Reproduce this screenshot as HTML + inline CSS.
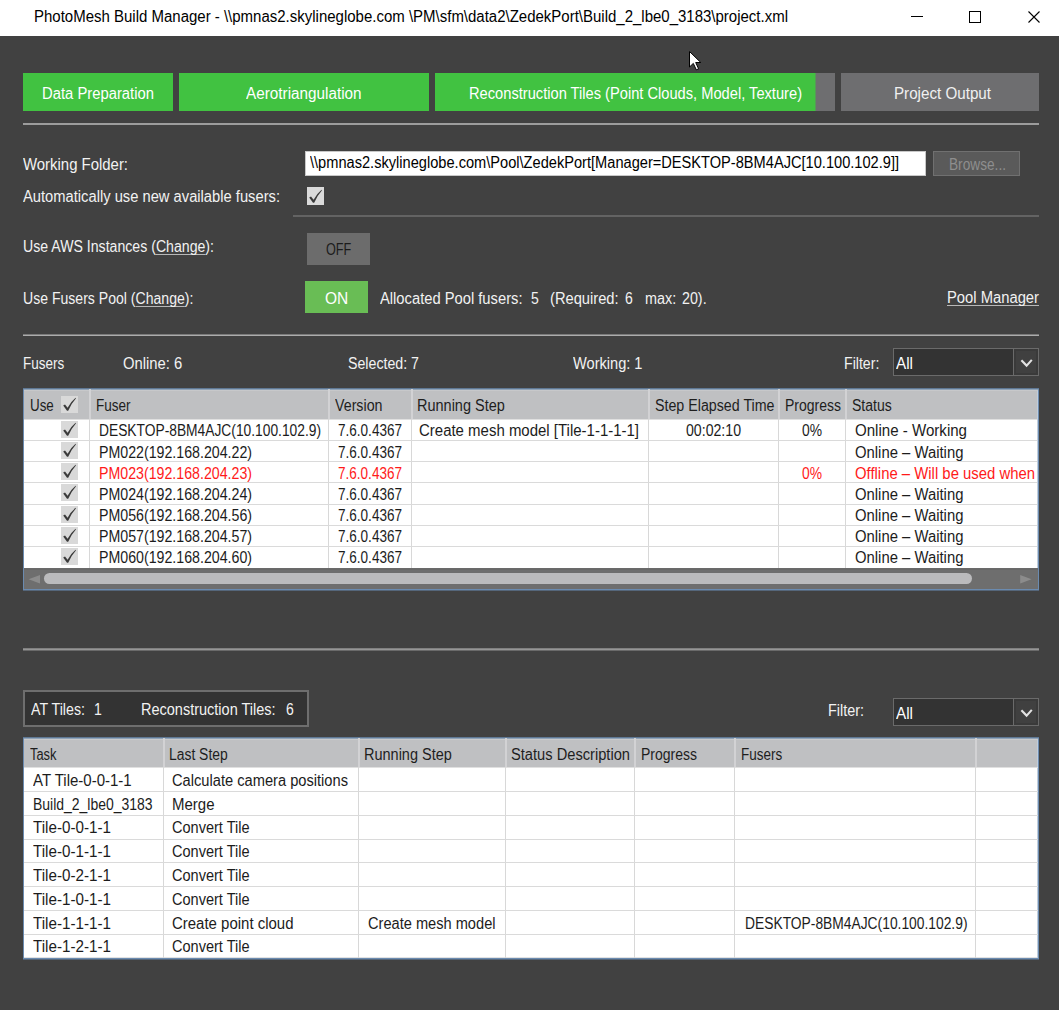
<!DOCTYPE html><html><head><meta charset="utf-8"><style>
html,body{margin:0;padding:0}body{width:1059px;height:1010px;position:relative;overflow:hidden;background:#414141;font-family:"Liberation Sans", sans-serif}
.t{position:absolute;white-space:pre;transform-origin:0 0}u{text-decoration:underline;text-underline-offset:2px;text-decoration-skip-ink:none;text-decoration-color:#b8b8b8}
</style></head><body>
<div style="position:absolute;left:0px;top:0px;width:1059px;height:36px;background:#ffffff;"></div>
<div class="t" id="t0" style="left:33.60px;top:9.46px;font-size:16px;line-height:16px;color:#000000;transform:scaleX(0.9368);">PhotoMesh Build Manager - \\pmnas2.skylineglobe.com \PM\sfm\data2\ZedekPort\Build_2_lbe0_3183\project.xml</div>
<div style="position:absolute;left:911px;top:16px;width:12px;height:1px;background:#000;"></div>
<div style="position:absolute;left:969px;top:11px;width:10px;height:10px;border:1px solid #000"></div>
<svg style="position:absolute;left:1027px;top:10px" width="14" height="14"><path d="M1.5 1.5 L12.5 12.5 M12.5 1.5 L1.5 12.5" stroke="#000" stroke-width="1.1"/></svg>
<div style="position:absolute;left:23px;top:73px;width:150px;height:38px;background:#41c241;"></div>
<div style="position:absolute;left:179px;top:73px;width:250px;height:38px;background:#41c241;"></div>
<div style="position:absolute;left:435px;top:73px;width:400px;height:38px;background:#6e6e70;"></div>
<div style="position:absolute;left:435px;top:73px;width:380px;height:38px;background:#41c241;"></div>
<div style="position:absolute;left:815px;top:73px;width:1px;height:38px;background:#579858;"></div>
<div style="position:absolute;left:841px;top:73px;width:198px;height:38px;background:#6e6e70;"></div>
<div class="t" id="t1" style="left:42.00px;top:85.83px;font-size:15.8px;line-height:15.8px;color:#ffffff;transform:scaleX(0.9377);">Data Preparation</div>
<div class="t" id="t2" style="left:246.30px;top:85.83px;font-size:15.8px;line-height:15.8px;color:#ffffff;transform:scaleX(0.9679);">Aerotriangulation</div>
<div class="t" id="t3" style="left:469.00px;top:85.83px;font-size:15.8px;line-height:15.8px;color:#ffffff;transform:scaleX(0.9281);">Reconstruction Tiles (Point Clouds, Model, Texture)</div>
<div class="t" id="t4" style="left:893.50px;top:85.83px;font-size:15.8px;line-height:15.8px;color:#f0f0f0;transform:scaleX(0.9605);">Project Output</div>
<div style="position:absolute;left:23px;top:123px;width:1016px;height:2px;background:#9c9c9c;"></div>
<div class="t" id="t5" style="left:23.00px;top:156.86px;font-size:16px;line-height:16px;color:#f2f2f2;transform:scaleX(0.9322);">Working Folder:</div>
<div style="position:absolute;left:305px;top:151px;width:621px;height:25px;background:#c8c8c8;"></div>
<div style="position:absolute;left:306px;top:152px;width:619px;height:23px;background:#ffffff;"></div>
<div class="t" id="t6" style="left:310.00px;top:155.46px;font-size:16px;line-height:16px;color:#000000;transform:scaleX(0.9133);">\\pmnas2.skylineglobe.com\Pool\ZedekPort[Manager=DESKTOP-8BM4AJC[10.100.102.9]]</div>
<div style="position:absolute;left:933px;top:151px;width:87px;height:25px;background:#707070;"></div>
<div style="position:absolute;left:934px;top:152px;width:85px;height:23px;background:#5a5a5a;"></div>
<div class="t" id="t7" style="left:948.50px;top:156.76px;font-size:16px;line-height:16px;color:#8e8e8e;transform:scaleX(0.8547);">Browse...</div>
<div class="t" id="t8" style="left:23.00px;top:189.06px;font-size:16px;line-height:16px;color:#f2f2f2;transform:scaleX(0.9203);">Automatically use new available fusers:</div>
<div style="position:absolute;left:307px;top:187px;width:17px;height:18px;background:#dadada;"></div>
<svg style="position:absolute;left:307px;top:188px" width="17" height="17"><path d="M2.2 9.6 L4.0 8.6 L6.6 11.8 Q9.5 6 14.6 1.8 L14.9 2.4 Q10.2 7.4 7.2 14.8 L6.0 14.8 Z" fill="#3a3a3a"/></svg>
<div style="position:absolute;left:293px;top:215px;width:746px;height:2px;background:#636363;"></div>
<div class="t" id="t9" style="left:23.00px;top:238.96px;font-size:16px;line-height:16px;color:#f2f2f2;transform:scaleX(0.8826);">Use AWS Instances (<u>Change</u>):</div>
<div style="position:absolute;left:307px;top:233px;width:63px;height:32px;background:#6c6c6c;"></div>
<div class="t" id="t10" style="left:325.60px;top:241.86px;font-size:16px;line-height:16px;color:#1c1c1c;transform:scaleX(0.7906);">OFF</div>
<div class="t" id="t11" style="left:23.00px;top:290.56px;font-size:16px;line-height:16px;color:#f2f2f2;transform:scaleX(0.8789);">Use Fusers Pool (<u>Change</u>):</div>
<div style="position:absolute;left:305px;top:281px;width:63px;height:32px;background:#69bd55;"></div>
<div class="t" id="t12" style="left:325.40px;top:290.56px;font-size:16px;line-height:16px;color:#ffffff;transform:scaleX(0.9708);">ON</div>
<div class="t" id="t13" style="left:380.30px;top:290.56px;font-size:16px;line-height:16px;color:#f2f2f2;transform:scaleX(0.9208);">Allocated Pool fusers:</div>
<div class="t" id="t14" style="left:530.80px;top:290.56px;font-size:16px;line-height:16px;color:#f2f2f2;transform:scaleX(0.8758);">5</div>
<div class="t" id="t15" style="left:550.40px;top:290.56px;font-size:16px;line-height:16px;color:#f2f2f2;transform:scaleX(0.9183);">(Required:</div>
<div class="t" id="t16" style="left:624.60px;top:290.56px;font-size:16px;line-height:16px;color:#f2f2f2;transform:scaleX(0.8758);">6</div>
<div class="t" id="t17" style="left:644.80px;top:290.56px;font-size:16px;line-height:16px;color:#f2f2f2;transform:scaleX(0.8999);">max:</div>
<div class="t" id="t18" style="left:681.60px;top:290.56px;font-size:16px;line-height:16px;color:#f2f2f2;transform:scaleX(0.8920);">20).</div>
<div class="t" id="t19" style="left:947.00px;top:290.26px;font-size:16px;line-height:16px;color:#f2f2f2;transform:scaleX(0.9235);"><u>Pool Manager</u></div>
<div style="position:absolute;left:23px;top:334px;width:1016px;height:1px;background:#7a7a7a;"></div>
<div style="position:absolute;left:23px;top:335px;width:1016px;height:1px;background:#acacac;"></div>
<div class="t" id="t20" style="left:23.00px;top:355.76px;font-size:16px;line-height:16px;color:#f2f2f2;transform:scaleX(0.8424);">Fusers</div>
<div class="t" id="t21" style="left:123.00px;top:355.56px;font-size:16px;line-height:16px;color:#f2f2f2;transform:scaleX(0.9259);">Online: 6</div>
<div class="t" id="t22" style="left:348.10px;top:355.56px;font-size:16px;line-height:16px;color:#f2f2f2;transform:scaleX(0.8868);">Selected: 7</div>
<div class="t" id="t23" style="left:573.40px;top:355.56px;font-size:16px;line-height:16px;color:#f2f2f2;transform:scaleX(0.9122);">Working: 1</div>
<div class="t" id="t24" style="left:844.00px;top:355.66px;font-size:16px;line-height:16px;color:#f2f2f2;transform:scaleX(0.8825);">Filter:</div>
<div style="position:absolute;left:893px;top:348px;width:146px;height:28px;background:#6a6a6a;"></div>
<div style="position:absolute;left:894px;top:349px;width:144px;height:26px;background:#333333;"></div>
<div style="position:absolute;left:1013px;top:349px;width:1px;height:26px;background:#6a6a6a;"></div>
<div style="position:absolute;left:1014px;top:349px;width:24px;height:26px;background:#3a3a3a;"></div>
<div style="position:absolute;left:1016px;top:351px;width:20px;height:22px;background:#404040;"></div>
<svg style="position:absolute;left:1014px;top:348px" width="24" height="28"><path d="M7.4 12.2 L12.6 17.6 L17.8 11.9" fill="none" stroke="#e2e2e2" stroke-width="2.1"/></svg>
<div class="t" id="t25" style="left:896.20px;top:355.66px;font-size:16px;line-height:16px;color:#ffffff;transform:scaleX(0.9561);">All</div>
<div style="position:absolute;left:23px;top:388px;width:1016px;height:203px;background:#6b8bb0;"></div>
<div style="position:absolute;left:23px;top:388px;width:1016px;height:1px;background:#5f7894;"></div>
<div style="position:absolute;left:23px;top:590px;width:1016px;height:1px;background:#55667a;"></div>
<div style="position:absolute;left:24px;top:389px;width:1014px;height:200px;background:#ffffff;"></div>
<div style="position:absolute;left:24px;top:389px;width:1014px;height:1px;background:#8fa3b8;"></div>
<div style="position:absolute;left:24px;top:390px;width:1014px;height:1px;background:#c7c8ca;"></div>
<div style="position:absolute;left:24px;top:391px;width:1014px;height:28px;background:#bfc0c2;"></div>
<div style="position:absolute;left:24px;top:419px;width:1014px;height:1px;background:#e0e0e0;"></div>
<div style="position:absolute;left:89px;top:389px;width:2px;height:30px;background:#d2d2d4;"></div>
<div style="position:absolute;left:89px;top:419px;width:1px;height:149px;background:#d8d8d8;"></div>
<div style="position:absolute;left:328px;top:389px;width:2px;height:30px;background:#d2d2d4;"></div>
<div style="position:absolute;left:328px;top:419px;width:1px;height:149px;background:#d8d8d8;"></div>
<div style="position:absolute;left:411px;top:389px;width:2px;height:30px;background:#d2d2d4;"></div>
<div style="position:absolute;left:411px;top:419px;width:1px;height:149px;background:#d8d8d8;"></div>
<div style="position:absolute;left:648px;top:389px;width:2px;height:30px;background:#d2d2d4;"></div>
<div style="position:absolute;left:648px;top:419px;width:1px;height:149px;background:#d8d8d8;"></div>
<div style="position:absolute;left:778px;top:389px;width:2px;height:30px;background:#d2d2d4;"></div>
<div style="position:absolute;left:778px;top:419px;width:1px;height:149px;background:#d8d8d8;"></div>
<div style="position:absolute;left:845px;top:389px;width:2px;height:30px;background:#d2d2d4;"></div>
<div style="position:absolute;left:845px;top:419px;width:1px;height:149px;background:#d8d8d8;"></div>
<div style="position:absolute;left:24px;top:440px;width:1014px;height:1px;background:#dadada;"></div>
<div style="position:absolute;left:24px;top:461px;width:1014px;height:1px;background:#dadada;"></div>
<div style="position:absolute;left:24px;top:482px;width:1014px;height:1px;background:#dadada;"></div>
<div style="position:absolute;left:24px;top:504px;width:1014px;height:1px;background:#dadada;"></div>
<div style="position:absolute;left:24px;top:525px;width:1014px;height:1px;background:#dadada;"></div>
<div style="position:absolute;left:24px;top:546px;width:1014px;height:1px;background:#dadada;"></div>
<div class="t" id="t26" style="left:29.60px;top:398.06px;font-size:16px;line-height:16px;color:#1e1e1e;transform:scaleX(0.8365);">Use</div>
<div style="position:absolute;left:61px;top:396px;width:17px;height:17px;background:#d9d9d9;"></div>
<svg style="position:absolute;left:61px;top:396px" width="17" height="17"><path d="M2.2 9.6 L4.0 8.6 L6.6 11.8 Q9.5 6 14.6 1.8 L14.9 2.4 Q10.2 7.4 7.2 14.8 L6.0 14.8 Z" fill="#3a3a3a"/></svg>
<div class="t" id="t27" style="left:96.00px;top:398.06px;font-size:16px;line-height:16px;color:#1e1e1e;transform:scaleX(0.8458);">Fuser</div>
<div class="t" id="t28" style="left:335.00px;top:398.06px;font-size:16px;line-height:16px;color:#1e1e1e;transform:scaleX(0.8899);">Version</div>
<div class="t" id="t29" style="left:417.00px;top:398.06px;font-size:16px;line-height:16px;color:#1e1e1e;transform:scaleX(0.9054);">Running Step</div>
<div class="t" id="t30" style="left:654.50px;top:398.06px;font-size:16px;line-height:16px;color:#1e1e1e;transform:scaleX(0.8898);">Step Elapsed Time</div>
<div class="t" id="t31" style="left:784.80px;top:398.06px;font-size:16px;line-height:16px;color:#1e1e1e;transform:scaleX(0.8746);">Progress</div>
<div class="t" id="t32" style="left:851.70px;top:398.06px;font-size:16px;line-height:16px;color:#1e1e1e;transform:scaleX(0.8752);">Status</div>
<div style="position:absolute;left:61px;top:421px;width:17px;height:17px;background:#d9d9d9;"></div>
<svg style="position:absolute;left:61px;top:421px" width="17" height="17"><path d="M2.2 9.6 L4.0 8.6 L6.6 11.8 Q9.5 6 14.6 1.8 L14.9 2.4 Q10.2 7.4 7.2 14.8 L6.0 14.8 Z" fill="#3a3a3a"/></svg>
<div class="t" id="t33" style="left:98.50px;top:423.46px;font-size:16px;line-height:16px;color:#1c1c1c;transform:scaleX(0.8618);">DESKTOP-8BM4AJC(10.100.102.9)</div>
<div class="t" id="t34" style="left:337.80px;top:423.46px;font-size:16px;line-height:16px;color:#1c1c1c;transform:scaleX(0.8463);">7.6.0.4367</div>
<div class="t" id="t35" style="left:419.40px;top:423.46px;font-size:16px;line-height:16px;color:#1c1c1c;transform:scaleX(0.9360);">Create mesh model [Tile-1-1-1-1]</div>
<div class="t" id="t36" style="left:686.00px;top:423.46px;font-size:16px;line-height:16px;color:#1c1c1c;transform:scaleX(0.8831);">00:02:10</div>
<div class="t" id="t37" style="left:802.00px;top:423.46px;font-size:16px;line-height:16px;color:#1c1c1c;transform:scaleX(0.8649);">0%</div>
<div class="t" id="t38" style="left:854.70px;top:423.46px;font-size:16px;line-height:16px;color:#1c1c1c;transform:scaleX(0.9423);">Online - Working</div>
<div style="position:absolute;left:61px;top:442px;width:17px;height:17px;background:#d9d9d9;"></div>
<svg style="position:absolute;left:61px;top:442px" width="17" height="17"><path d="M2.2 9.6 L4.0 8.6 L6.6 11.8 Q9.5 6 14.6 1.8 L14.9 2.4 Q10.2 7.4 7.2 14.8 L6.0 14.8 Z" fill="#3a3a3a"/></svg>
<div class="t" id="t39" style="left:98.50px;top:444.60px;font-size:16px;line-height:16px;color:#1c1c1c;transform:scaleX(0.8866);">PM022(192.168.204.22)</div>
<div class="t" id="t40" style="left:337.80px;top:444.60px;font-size:16px;line-height:16px;color:#1c1c1c;transform:scaleX(0.8463);">7.6.0.4367</div>
<div class="t" id="t41" style="left:854.70px;top:444.60px;font-size:16px;line-height:16px;color:#1c1c1c;transform:scaleX(0.9281);">Online – Waiting</div>
<div style="position:absolute;left:61px;top:463px;width:17px;height:17px;background:#d9d9d9;"></div>
<svg style="position:absolute;left:61px;top:463px" width="17" height="17"><path d="M2.2 9.6 L4.0 8.6 L6.6 11.8 Q9.5 6 14.6 1.8 L14.9 2.4 Q10.2 7.4 7.2 14.8 L6.0 14.8 Z" fill="#3a3a3a"/></svg>
<div class="t" id="t42" style="left:98.50px;top:465.74px;font-size:16px;line-height:16px;color:#ff1a1a;transform:scaleX(0.8866);">PM023(192.168.204.23)</div>
<div class="t" id="t43" style="left:337.80px;top:465.74px;font-size:16px;line-height:16px;color:#ff1a1a;transform:scaleX(0.8463);">7.6.0.4367</div>
<div class="t" id="t44" style="left:802.00px;top:465.74px;font-size:16px;line-height:16px;color:#ff1a1a;transform:scaleX(0.8649);">0%</div>
<div class="t" id="t45" style="left:854.70px;top:465.74px;font-size:16px;line-height:16px;color:#ff1a1a;transform:scaleX(0.9298);">Offline – Will be used when</div>
<div style="position:absolute;left:61px;top:484px;width:17px;height:17px;background:#d9d9d9;"></div>
<svg style="position:absolute;left:61px;top:484px" width="17" height="17"><path d="M2.2 9.6 L4.0 8.6 L6.6 11.8 Q9.5 6 14.6 1.8 L14.9 2.4 Q10.2 7.4 7.2 14.8 L6.0 14.8 Z" fill="#3a3a3a"/></svg>
<div class="t" id="t46" style="left:98.50px;top:486.88px;font-size:16px;line-height:16px;color:#1c1c1c;transform:scaleX(0.8866);">PM024(192.168.204.24)</div>
<div class="t" id="t47" style="left:337.80px;top:486.88px;font-size:16px;line-height:16px;color:#1c1c1c;transform:scaleX(0.8463);">7.6.0.4367</div>
<div class="t" id="t48" style="left:854.70px;top:486.88px;font-size:16px;line-height:16px;color:#1c1c1c;transform:scaleX(0.9281);">Online – Waiting</div>
<div style="position:absolute;left:61px;top:506px;width:17px;height:17px;background:#d9d9d9;"></div>
<svg style="position:absolute;left:61px;top:506px" width="17" height="17"><path d="M2.2 9.6 L4.0 8.6 L6.6 11.8 Q9.5 6 14.6 1.8 L14.9 2.4 Q10.2 7.4 7.2 14.8 L6.0 14.8 Z" fill="#3a3a3a"/></svg>
<div class="t" id="t49" style="left:98.50px;top:508.02px;font-size:16px;line-height:16px;color:#1c1c1c;transform:scaleX(0.8866);">PM056(192.168.204.56)</div>
<div class="t" id="t50" style="left:337.80px;top:508.02px;font-size:16px;line-height:16px;color:#1c1c1c;transform:scaleX(0.8463);">7.6.0.4367</div>
<div class="t" id="t51" style="left:854.70px;top:508.02px;font-size:16px;line-height:16px;color:#1c1c1c;transform:scaleX(0.9281);">Online – Waiting</div>
<div style="position:absolute;left:61px;top:527px;width:17px;height:17px;background:#d9d9d9;"></div>
<svg style="position:absolute;left:61px;top:527px" width="17" height="17"><path d="M2.2 9.6 L4.0 8.6 L6.6 11.8 Q9.5 6 14.6 1.8 L14.9 2.4 Q10.2 7.4 7.2 14.8 L6.0 14.8 Z" fill="#3a3a3a"/></svg>
<div class="t" id="t52" style="left:98.50px;top:529.16px;font-size:16px;line-height:16px;color:#1c1c1c;transform:scaleX(0.8866);">PM057(192.168.204.57)</div>
<div class="t" id="t53" style="left:337.80px;top:529.16px;font-size:16px;line-height:16px;color:#1c1c1c;transform:scaleX(0.8463);">7.6.0.4367</div>
<div class="t" id="t54" style="left:854.70px;top:529.16px;font-size:16px;line-height:16px;color:#1c1c1c;transform:scaleX(0.9281);">Online – Waiting</div>
<div style="position:absolute;left:61px;top:548px;width:17px;height:17px;background:#d9d9d9;"></div>
<svg style="position:absolute;left:61px;top:548px" width="17" height="17"><path d="M2.2 9.6 L4.0 8.6 L6.6 11.8 Q9.5 6 14.6 1.8 L14.9 2.4 Q10.2 7.4 7.2 14.8 L6.0 14.8 Z" fill="#3a3a3a"/></svg>
<div class="t" id="t55" style="left:98.50px;top:550.30px;font-size:16px;line-height:16px;color:#1c1c1c;transform:scaleX(0.8866);">PM060(192.168.204.60)</div>
<div class="t" id="t56" style="left:337.80px;top:550.30px;font-size:16px;line-height:16px;color:#1c1c1c;transform:scaleX(0.8463);">7.6.0.4367</div>
<div class="t" id="t57" style="left:854.70px;top:550.30px;font-size:16px;line-height:16px;color:#1c1c1c;transform:scaleX(0.9281);">Online – Waiting</div>
<div style="position:absolute;left:1038px;top:389px;width:1px;height:201px;background:#6b8bb0;"></div>
<div style="position:absolute;left:1037px;top:391px;width:1px;height:177px;background:#c0cddb;"></div>
<div style="position:absolute;left:24px;top:568px;width:1014px;height:1px;background:#6a6a6a;"></div>
<div style="position:absolute;left:24px;top:569px;width:1014px;height:1px;background:#686868;"></div>
<div style="position:absolute;left:24px;top:570px;width:1014px;height:19px;background:#6e6e6e;"></div>
<div style="position:absolute;left:44px;top:573px;width:928px;height:11px;border-radius:6px;background:#bbbbbd"></div>
<svg style="position:absolute;left:28px;top:574px" width="13" height="10"><path d="M0.6 5.2 L12 0.9 L12 9.5 Z" fill="#8c8c8c"/></svg>
<svg style="position:absolute;left:1020px;top:574px" width="12" height="10"><path d="M11.6 5.2 L0.2 0.9 L0.2 9.5 Z" fill="#8c8c8c"/></svg>
<div style="position:absolute;left:23px;top:648px;width:1016px;height:1px;background:#808080;"></div>
<div style="position:absolute;left:23px;top:649px;width:1016px;height:1px;background:#969696;"></div>
<div style="position:absolute;left:23px;top:650px;width:1016px;height:1px;background:#6a6a6a;"></div>
<div style="position:absolute;left:23px;top:690px;width:286px;height:37px;background:#6e6e6e;"></div>
<div style="position:absolute;left:25px;top:692px;width:282px;height:33px;background:#333333;"></div>
<div class="t" id="t58" style="left:31.10px;top:701.66px;font-size:16px;line-height:16px;color:#f2f2f2;transform:scaleX(0.8887);">AT Tiles:</div>
<div class="t" id="t59" style="left:94.20px;top:701.66px;font-size:16px;line-height:16px;color:#f2f2f2;transform:scaleX(0.8758);">1</div>
<div class="t" id="t60" style="left:140.80px;top:701.66px;font-size:16px;line-height:16px;color:#f2f2f2;transform:scaleX(0.9063);">Reconstruction Tiles:</div>
<div class="t" id="t61" style="left:286.00px;top:701.66px;font-size:16px;line-height:16px;color:#f2f2f2;transform:scaleX(0.8758);">6</div>
<div class="t" id="t62" style="left:827.60px;top:703.16px;font-size:16px;line-height:16px;color:#f2f2f2;transform:scaleX(0.9000);">Filter:</div>
<div style="position:absolute;left:893px;top:698px;width:146px;height:28px;background:#6a6a6a;"></div>
<div style="position:absolute;left:894px;top:699px;width:144px;height:26px;background:#333333;"></div>
<div style="position:absolute;left:1013px;top:699px;width:1px;height:26px;background:#6a6a6a;"></div>
<div style="position:absolute;left:1014px;top:699px;width:24px;height:26px;background:#3a3a3a;"></div>
<div style="position:absolute;left:1016px;top:701px;width:20px;height:22px;background:#404040;"></div>
<svg style="position:absolute;left:1014px;top:698px" width="24" height="28"><path d="M7.4 12.2 L12.6 17.6 L17.8 11.9" fill="none" stroke="#e2e2e2" stroke-width="2.1"/></svg>
<div class="t" id="t63" style="left:896.20px;top:705.56px;font-size:16px;line-height:16px;color:#ffffff;transform:scaleX(0.9561);">All</div>
<div style="position:absolute;left:23px;top:737px;width:1016px;height:223px;background:#6b8bb0;"></div>
<div style="position:absolute;left:23px;top:737px;width:1016px;height:1px;background:#5f7894;"></div>
<div style="position:absolute;left:23px;top:959px;width:1016px;height:1px;background:#55667a;"></div>
<div style="position:absolute;left:24px;top:738px;width:1014px;height:220px;background:#ffffff;"></div>
<div style="position:absolute;left:24px;top:738px;width:1014px;height:1px;background:#8fa3b8;"></div>
<div style="position:absolute;left:24px;top:739px;width:1014px;height:1px;background:#c9cacc;"></div>
<div style="position:absolute;left:24px;top:740px;width:1014px;height:27px;background:#bfc0c2;"></div>
<div style="position:absolute;left:24px;top:957px;width:1014px;height:1px;background:#e2e2e2;"></div>
<div style="position:absolute;left:1037px;top:740px;width:1px;height:218px;background:#c0cddb;"></div>
<div style="position:absolute;left:24px;top:767px;width:1014px;height:1px;background:#e0e0e0;"></div>
<div style="position:absolute;left:163px;top:738px;width:2px;height:29px;background:#d2d2d4;"></div>
<div style="position:absolute;left:163px;top:767px;width:1px;height:191px;background:#d8d8d8;"></div>
<div style="position:absolute;left:358px;top:738px;width:2px;height:29px;background:#d2d2d4;"></div>
<div style="position:absolute;left:358px;top:767px;width:1px;height:191px;background:#d8d8d8;"></div>
<div style="position:absolute;left:505px;top:738px;width:2px;height:29px;background:#d2d2d4;"></div>
<div style="position:absolute;left:505px;top:767px;width:1px;height:191px;background:#d8d8d8;"></div>
<div style="position:absolute;left:634px;top:738px;width:2px;height:29px;background:#d2d2d4;"></div>
<div style="position:absolute;left:634px;top:767px;width:1px;height:191px;background:#d8d8d8;"></div>
<div style="position:absolute;left:734px;top:738px;width:2px;height:29px;background:#d2d2d4;"></div>
<div style="position:absolute;left:734px;top:767px;width:1px;height:191px;background:#d8d8d8;"></div>
<div style="position:absolute;left:975px;top:738px;width:2px;height:29px;background:#d2d2d4;"></div>
<div style="position:absolute;left:975px;top:767px;width:1px;height:191px;background:#d8d8d8;"></div>
<div style="position:absolute;left:24px;top:791px;width:1014px;height:1px;background:#dadada;"></div>
<div style="position:absolute;left:24px;top:815px;width:1014px;height:1px;background:#dadada;"></div>
<div style="position:absolute;left:24px;top:839px;width:1014px;height:1px;background:#dadada;"></div>
<div style="position:absolute;left:24px;top:862px;width:1014px;height:1px;background:#dadada;"></div>
<div style="position:absolute;left:24px;top:886px;width:1014px;height:1px;background:#dadada;"></div>
<div style="position:absolute;left:24px;top:910px;width:1014px;height:1px;background:#dadada;"></div>
<div style="position:absolute;left:24px;top:934px;width:1014px;height:1px;background:#dadada;"></div>
<div class="t" id="t64" style="left:30.00px;top:747.36px;font-size:16px;line-height:16px;color:#1e1e1e;transform:scaleX(0.8053);">Task</div>
<div class="t" id="t65" style="left:169.10px;top:747.36px;font-size:16px;line-height:16px;color:#1e1e1e;transform:scaleX(0.8682);">Last Step</div>
<div class="t" id="t66" style="left:364.20px;top:747.36px;font-size:16px;line-height:16px;color:#1e1e1e;transform:scaleX(0.9054);">Running Step</div>
<div class="t" id="t67" style="left:511.00px;top:747.36px;font-size:16px;line-height:16px;color:#1e1e1e;transform:scaleX(0.9165);">Status Description</div>
<div class="t" id="t68" style="left:641.00px;top:747.36px;font-size:16px;line-height:16px;color:#1e1e1e;transform:scaleX(0.8746);">Progress</div>
<div class="t" id="t69" style="left:741.00px;top:747.36px;font-size:16px;line-height:16px;color:#1e1e1e;transform:scaleX(0.8424);">Fusers</div>
<div class="t" id="t70" style="left:33.30px;top:772.76px;font-size:16px;line-height:16px;color:#1c1c1c;transform:scaleX(0.9380);">AT Tile-0-0-1-1</div>
<div class="t" id="t71" style="left:172.40px;top:772.76px;font-size:16px;line-height:16px;color:#1c1c1c;transform:scaleX(0.9162);">Calculate camera positions</div>
<div class="t" id="t72" style="left:33.30px;top:796.56px;font-size:16px;line-height:16px;color:#1c1c1c;transform:scaleX(0.8729);">Build_2_lbe0_3183</div>
<div class="t" id="t73" style="left:172.40px;top:796.56px;font-size:16px;line-height:16px;color:#1c1c1c;transform:scaleX(0.9370);">Merge</div>
<div class="t" id="t74" style="left:33.30px;top:820.36px;font-size:16px;line-height:16px;color:#1c1c1c;transform:scaleX(0.9501);">Tile-0-0-1-1</div>
<div class="t" id="t75" style="left:172.40px;top:820.36px;font-size:16px;line-height:16px;color:#1c1c1c;transform:scaleX(0.9078);">Convert Tile</div>
<div class="t" id="t76" style="left:33.30px;top:844.16px;font-size:16px;line-height:16px;color:#1c1c1c;transform:scaleX(0.9501);">Tile-0-1-1-1</div>
<div class="t" id="t77" style="left:172.40px;top:844.16px;font-size:16px;line-height:16px;color:#1c1c1c;transform:scaleX(0.9078);">Convert Tile</div>
<div class="t" id="t78" style="left:33.30px;top:867.96px;font-size:16px;line-height:16px;color:#1c1c1c;transform:scaleX(0.9501);">Tile-0-2-1-1</div>
<div class="t" id="t79" style="left:172.40px;top:867.96px;font-size:16px;line-height:16px;color:#1c1c1c;transform:scaleX(0.9078);">Convert Tile</div>
<div class="t" id="t80" style="left:33.30px;top:891.76px;font-size:16px;line-height:16px;color:#1c1c1c;transform:scaleX(0.9501);">Tile-1-0-1-1</div>
<div class="t" id="t81" style="left:172.40px;top:891.76px;font-size:16px;line-height:16px;color:#1c1c1c;transform:scaleX(0.9078);">Convert Tile</div>
<div class="t" id="t82" style="left:33.30px;top:915.56px;font-size:16px;line-height:16px;color:#1c1c1c;transform:scaleX(0.9501);">Tile-1-1-1-1</div>
<div class="t" id="t83" style="left:172.40px;top:915.56px;font-size:16px;line-height:16px;color:#1c1c1c;transform:scaleX(0.9356);">Create point cloud</div>
<div class="t" id="t84" style="left:367.50px;top:915.56px;font-size:16px;line-height:16px;color:#1c1c1c;transform:scaleX(0.9132);">Create mesh model</div>
<div class="t" id="t85" style="left:745.00px;top:915.56px;font-size:16px;line-height:16px;color:#1c1c1c;transform:scaleX(0.8637);">DESKTOP-8BM4AJC(10.100.102.9)</div>
<div class="t" id="t86" style="left:33.30px;top:939.36px;font-size:16px;line-height:16px;color:#1c1c1c;transform:scaleX(0.9501);">Tile-1-2-1-1</div>
<div class="t" id="t87" style="left:172.40px;top:939.36px;font-size:16px;line-height:16px;color:#1c1c1c;transform:scaleX(0.9078);">Convert Tile</div>
<svg style="position:absolute;left:688px;top:50px" width="16" height="22"><path d="M1.5 1.5 L1.5 17 L5.3 13.4 L8.3 19.8 L10.6 18.8 L7.7 12.5 L12.8 12.5 Z" fill="#fff" stroke="#000" stroke-width="1" stroke-linejoin="round"/></svg>
</body></html>
